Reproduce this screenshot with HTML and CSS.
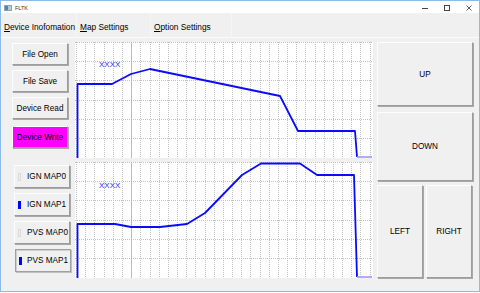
FILE: index.html
```
<!DOCTYPE html>
<html lang="en">
<head>
    <meta charset="UTF-8">
    <title>FLTK</title>
    <link rel="stylesheet" href="styles.css">
</head>
<body>
    <div class="window">
        <div class="titlebar">
            <span class="app-icon"></span>
            <span class="app-title">FLTK</span>
            <span class="win-controls">
                <svg width="8" height="8" viewBox="0 0 8 8"><path d="M1 4.5H7" stroke="#444" stroke-width="1"/></svg>
                <svg width="8" height="8" viewBox="0 0 8 8"><rect x="1.5" y="1.5" width="5" height="5" fill="none" stroke="#444" stroke-width="1"/></svg>
                <svg width="8" height="8" viewBox="0 0 8 8"><path d="M1.5 1.5L6.5 6.5M6.5 1.5L1.5 6.5" stroke="#444" stroke-width="0.9"/></svg>
            </span>
        </div>
        <div class="tabs">
            <div class="tab tab-device"><u>D</u>evice Inofomation</div>
            <div class="tab tab-map"><u>M</u>ap Settings</div>
            <div class="tab tab-option"><u>O</u>ption Settings</div>
        </div>
        <div class="content">
            <div class="file-buttons">
                <button class="btn">File Open</button>
                <button class="btn">File Save</button>
                <button class="btn">Device Read</button>
                <button class="btn btn-write">Device Write</button>
            </div>

            <svg class="chart" width="298" height="116" viewBox="0 0 298 116">
                <g id="grid" fill="none" stroke="#c2c2c2" stroke-width="1" stroke-dasharray="1 1">
                    <path d="M1.5 0V116M10.5 0V116M19.5 0V116M29.5 0V116M38.5 0V116M47.5 0V116M65.5 0V116M75.5 0V116M84.5 0V116M93.5 0V116M102.5 0V116M111.5 0V116M120.5 0V116M130.5 0V116M139.5 0V116M148.5 0V116M157.5 0V116M166.5 0V116M175.5 0V116M185.5 0V116M194.5 0V116M203.5 0V116M212.5 0V116M221.5 0V116M230.5 0V116M240.5 0V116M249.5 0V116M258.5 0V116M267.5 0V116M276.5 0V116M285.5 0V116M295.5 0V116"/>
                    <path d="M0 0.5H298M0 19.5H298M0 38.5H298M0 58.5H298M0 77.5H298M0 96.5H298"/>
                    <path d="M56.5 0V116" stroke="#c2c28a" stroke-dasharray="none"/>
                </g>
                <text class="chart-label" x="24" y="24.5">XXXX</text>
                <polyline class="curve" points="2.5,116 2.5,42 37,42 56,32 75,27 205,54 223,89 280,89 282,115"/>
                <path class="tail" d="M282 115H297"/>
            </svg>

            <div class="nav">
                <button class="btn btn-up">UP</button>
                <button class="btn btn-down">DOWN</button>
                <div class="nav-row">
                    <button class="btn btn-left">LEFT</button>
                    <button class="btn btn-right">RIGHT</button>
                </div>
            </div>

            <div class="map-buttons">
                <button class="btn btn-light"><span class="led"></span><span class="lbl">IGN MAP0</span></button>
                <button class="btn btn-light"><span class="led led-on"></span><span class="lbl">IGN MAP1</span></button>
                <button class="btn btn-light"><span class="led"></span><span class="lbl">PVS MAP0</span></button>
                <button class="btn btn-light btn-pressed"><span class="led led-on"></span><span class="lbl">PVS MAP1</span></button>
            </div>

            <svg class="chart" width="298" height="116" viewBox="0 0 298 116">
                <use href="#grid"/>
                <text class="chart-label" x="24" y="25.5">XXXX</text>
                <polyline class="curve" points="2.5,116 2.5,62 40,62 56,65 85,65 112,62 130,51 167,13 186,1.5 225,1.5 242,13 279,13 282,115"/>
                <path class="tail" d="M282 115H297"/>
            </svg>
        </div>
    </div>
</body>
</html>
```

FILE: styles.css
```
html, body {
    margin: 0;
    padding: 0;
    background: #ffffff;
}
.window {
    width: 480px;
    height: 292px;
    box-sizing: border-box;
    border: 1px solid #8dbbe8;
    background: #f0f0f0;
    font-family: "Liberation Sans", Arial, sans-serif;
    color: #000;
    display: flex;
    flex-direction: column;
}
.titlebar {
    height: 12px;
    background: #ffffff;
    display: flex;
    align-items: center;
    padding-left: 3px;
}
.app-icon {
    width: 6px;
    height: 4px;
    margin-top: 1px;
    background: linear-gradient(90deg, #5a7fa8 0 3px, #b9c6d4 3px);
    border: 1px solid #8fa3b8;
}
.app-title {
    font-size: 5.5px;
    margin-left: 3px;
    margin-top: 1px;
    color: #333;
}
.win-controls {
    margin-left: auto;
    display: flex;
    gap: 14px;
    margin-right: 6px;
    margin-top: 1px;
}
.tabs {
    height: 24px;
    display: flex;
    border-bottom: 1px solid #fbfbfb;
}
.tab {
    font-size: 8.3px;
    display: flex;
    align-items: center;
    padding-top: 3px;
    box-sizing: border-box;
    border-right: 1px dotted #fafafa;
    padding-left: 3px;
    white-space: nowrap;
}
.tab-device { width: 76px; }
.tab-map { width: 74px; }
.tab-option { width: 81px; }
.tab u {
    text-decoration-thickness: 1px;
    text-underline-offset: 1px;
}
.content {
    display: grid;
    grid-template-columns: 74px 298px 1fr;
    grid-template-rows: 116px 116px;
    row-gap: 4px;
    padding-top: 4px;
}
.chart {
    display: block;
    background: #ffffff;
}
.chart-label {
    font-family: "Liberation Sans", Arial, sans-serif;
    font-size: 8px;
    fill: #2a2aff;
}
.curve {
    fill: none;
    stroke: #0a0aff;
    stroke-width: 1.8;
    stroke-linejoin: round;
}
.tail {
    fill: none;
    stroke: #9a9aff;
    stroke-width: 1.6;
}
.btn {
    font-family: "Liberation Sans", Arial, sans-serif;
    font-size: 8.2px;
    color: #000;
    background: #f0f0f0;
    border: 1px solid;
    border-color: #fdfdfd #9c9c9c #9c9c9c #fdfdfd;
    box-shadow: 1px 1px 0 #a8a8a8;
    padding: 0;
    margin: 0;
    box-sizing: border-box;
    white-space: nowrap;
}
.file-buttons {
    display: flex;
    flex-direction: column;
    gap: 5px;
    padding: 1px 0 0 11px;
}
.file-buttons .btn {
    width: 56px;
    height: 22px;
}
.btn-write {
    background: #ff00ff;
    margin-top: 2px;
}
.map-buttons {
    display: flex;
    flex-direction: column;
    gap: 5px;
    padding: 3px 0 0 13px;
}
.btn-light {
    width: 56px;
    height: 23px;
    display: flex;
    align-items: center;
    padding-left: 3px;
}
.led {
    flex: none;
    width: 3px;
    height: 8px;
    box-sizing: border-box;
    border: 1px solid #dadada;
}
.led-on {
    background: #0000ff;
    border-color: #0000ff;
}
.lbl {
    margin-left: 6px;
}
.btn-pressed {
    margin-left: 1px;
    border-color: #a0a0a0;
    box-shadow: inset 1px 1px 0 #d0d0d0, 1px 1px 0 #c0c0c0;
}
.btn-pressed .lbl {
    margin-left: 5px;
}
.nav {
    grid-column: 3;
    grid-row: 1 / 3;
    display: flex;
    flex-direction: column;
    padding-left: 4px;
}
.btn-up {
    width: 96px;
    height: 64px;
}
.btn-down {
    width: 96px;
    height: 69px;
    margin-top: 6px;
}
.nav-row {
    display: flex;
    gap: 3px;
    margin-top: 4px;
}
.btn-left {
    width: 46px;
    height: 93px;
}
.btn-right {
    width: 46px;
    height: 93px;
}
```
